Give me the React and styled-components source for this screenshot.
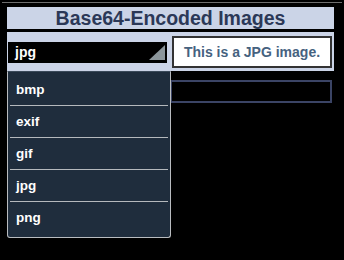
import React from "react";
import styled, { createGlobalStyle } from "styled-components";

const Global = createGlobalStyle`
  html, body { margin: 0; padding: 0; background: #000; }
  body { padding-top: 2px; font-family: "Liberation Sans", Arial, sans-serif; }
  * { box-sizing: border-box; }
`;

const Frame = styled.div`
  width: 340px;
  margin-left: 2px;
  border-top: 1px solid #6e6e6e;
  padding: 4px 8px 0 5px;
  position: relative;
  height: 257px;
`;

const Header = styled.h1`
  margin: 0 0 3px 0;
  height: 22px;
  background: #cbd4e7;
  color: #2b3857;
  font-size: 19.5px;
  font-weight: bold;
  line-height: 22px;
  text-align: center;
`;

const Panel = styled.div`
  height: 39px;
  background: #cbd4e7;
  display: flex;
  align-items: center;
  padding: 0 2px 0 1px;
  gap: 5px;
`;

const SelectBox = styled.div`
  position: relative;
  width: 159px;
  height: 21px;
  background: #000;
  color: #fff;
  font-size: 14px;
  font-weight: bold;
  line-height: 21px;
  padding-left: 7px;
  margin-top: 2px;
`;

const Arrow = styled.svg`
  position: absolute;
  right: 2px;
  bottom: 3px;
`;

const Message = styled.div`
  width: 160px;
  height: 32px;
  background: #fff;
  border: 2px solid #333;
  color: #46627f;
  font-size: 14px;
  font-weight: bold;
  display: flex;
  align-items: center;
  justify-content: center;
`;

const InputRow = styled.div`
  display: flex;
  justify-content: flex-end;
  padding-right: 2px;
  margin-top: 9px;
`;

const Field = styled.div`
  width: 162px;
  height: 23px;
  background: #000;
  border: 2px solid #3b4465;
`;

const List = styled.ul`
  position: absolute;
  left: 5px;
  top: 68px;
  width: 164px;
  margin: 0;
  padding: 1px 2px 3px 2px;
  list-style: none;
  background: #1f2d3d;
  border: 1px solid #b9bcc0;
  border-top-color: #3b4a5a;
  border-radius: 0 0 3px 3px;
`;

const Item = styled.li`
  height: 32px;
  color: #fff;
  font-size: 13.5px;
  font-weight: bold;
  line-height: 31px;
  padding-left: 6px;
  border-bottom: ${(p) => (p.$last ? "none" : "1px solid #b5b9bd")};
  ${(p) => (p.$first ? "height: 33px; line-height: 33px;" : "")}
`;

const options = ["bmp", "exif", "gif", "jpg", "png"];

export default function App() {
  return (
    <>
      <Global />
      <Frame>
        <Header>Base64-Encoded Images</Header>
        <Panel>
          <SelectBox>
            jpg
            <Arrow width="16" height="15" viewBox="0 0 16 15">
              <polygon points="0,15 16,15 16,0" fill="#8c969b" />
            </Arrow>
          </SelectBox>
          <Message>This is a JPG image.</Message>
        </Panel>
        <InputRow>
          <Field />
        </InputRow>
        <List>
          {options.map((o, i) => (
            <Item key={o} $first={i === 0} $last={i === options.length - 1}>
              {o}
            </Item>
          ))}
        </List>
      </Frame>
    </>
  );
}
